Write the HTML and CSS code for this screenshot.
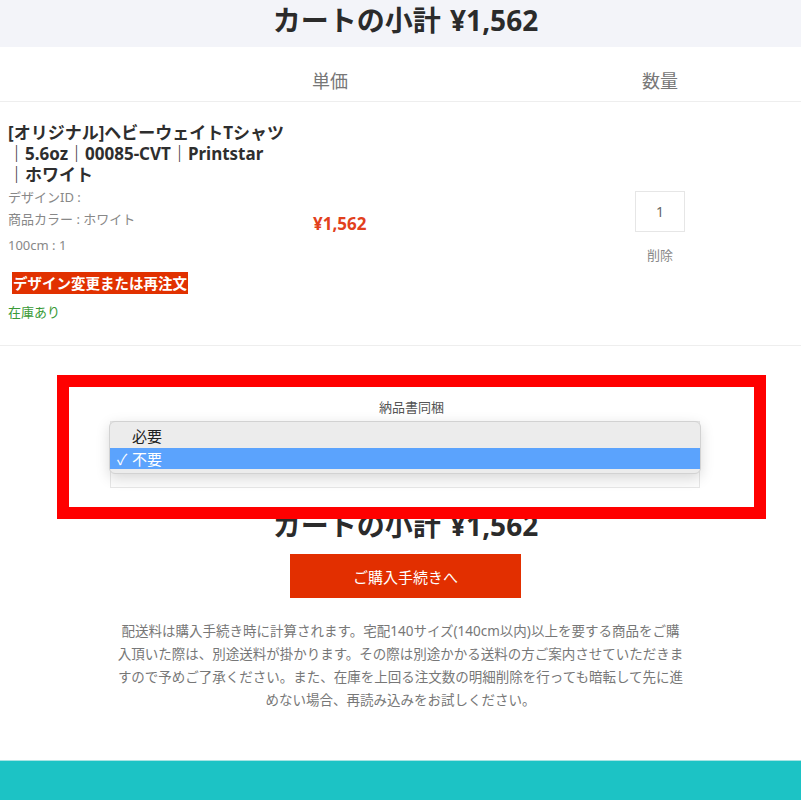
FILE: index.html
```html
<!DOCTYPE html>
<html lang="ja">
<head>
    <meta charset="UTF-8">
    <meta name="viewport" content="width=device-width, initial-scale=1.0">
    <title>カート</title>
    <link rel="stylesheet" href="styles.css">
</head>
<body>
    <header class="cart-top">
        <p class="cart-total">カートの小計 ¥1,562</p>
    </header>

    <section class="cart-head">
        <span></span>
        <span class="head-price">単価</span>
        <span></span>
        <span class="head-qty">数量</span>
    </section>

    <!-- item row -->
    <section class="cart-item">
        <div class="item-info">
            <p class="item-name">[オリジナル]ヘビーウェイトTシャツ<br>｜5.6oz｜00085-CVT｜Printstar<br>｜ホワイト</p>
            <p class="item-meta">デザインID :<br>商品カラー : ホワイト</p>
            <p class="item-meta size">100cm : 1</p>
            <p class="reorder"><span>デザイン変更または再注文</span></p>
            <p class="stock">在庫あり</p>
        </div>
        <div class="item-price">¥1,562</div>
        <span></span>
        <div class="item-qty">
            <input class="qty-input" type="text" value="1">
            <a class="remove" href="#">削除</a>
        </div>
    </section>

    <section class="checkout">
        <p class="option-label">納品書同梱</p>
        <div class="select-wrap">
            <div class="select-box"></div>
            <!-- open dropdown -->
            <ul class="select-menu">
                <li>必要</li>
                <li class="selected"><span class="check">✓</span>不要</li>
            </ul>
        </div>
        <p class="cart-total bottom-total">カートの小計 ¥1,562</p>
        <button class="buy-button">ご購入手続きへ</button>
        <p class="notice">配送料は購入手続き時に計算されます。宅配140サイズ(140cm以内)以上を要する商品をご購入頂いた際は、別途送料が掛かります。その際は別途かかる送料の方ご案内させていただきますので予めご了承ください。また、在庫を上回る注文数の明細削除を行っても暗転して先に進めない場合、再読み込みをお試しください。</p>

        <div class="highlight"></div>
    </section>

    <footer class="site-footer"></footer>
</body>
</html>
```

FILE: styles.css
```css
*{
    padding: 0;
    margin: 0;
    box-sizing: border-box;
}
body{
    font-family: "Noto Sans", "Noto Sans CJK JP", sans-serif;
    color: #333;
    background-color: white;
    width: 801px;
}

.cart-top{
    background-color: #f3f4f9;
    height: 47px;
    text-align: center;
}
.cart-total{
    font-family: "Noto Sans", "Noto Sans CJK JP", sans-serif;
    font-size: 28px;
    font-weight: bold;
    line-height: 40px;
    color: #2b2b2b;
    text-align: center;
    word-spacing: 2px;
    padding-left: 10px;
}

.cart-head,
.cart-item{
    display: grid;
    grid-template-columns: 290px 100px 170px 200px 1fr;
}
.cart-head{
    height: 55px;
    padding-top: 12px;
    line-height: 42px;
    font-family: "Noto Sans CJK JP", sans-serif;
    font-size: 18px;
    color: #777;
    border-bottom: 1px solid #eeeeee;
}
.head-price{
    text-align: center;
    padding-right: 20px;
}
.head-qty{
    text-align: center;
}

.cart-item{
    border-bottom: 1px solid #eeeeee;
}
.item-info{
    padding: 20px 0 22px 8px;
}
.item-name{
    font-size: 17px;
    font-weight: bold;
    line-height: 21px;
    color: #2e2e2e;
    white-space: nowrap;
}
.item-meta{
    font-size: 13px;
    line-height: 22px;
    color: #888;
    margin-top: 1px;
}
.item-meta.size{
    margin-top: 4px;
}
.reorder{
    margin-top: 17px;
    padding-left: 4px;
    line-height: 20px;
}
.reorder span{
    background-color: #e13100;
    color: white;
    font-size: 14.5px;
    font-weight: bold;
    padding: 1px 1px;
}
.stock{
    margin-top: 8px;
    font-size: 13px;
    line-height: 22px;
    color: #3a9a37;
}
.item-price{
    align-self: center;
    padding-left: 23px;
    font-size: 17px;
    font-weight: bold;
    color: #e2401c;
}
.item-qty{
    display: flex;
    flex-direction: column;
    align-items: center;
    padding-top: 89px;
}
.qty-input{
    width: 50px;
    height: 41px;
    border: 1px solid #e6e6e6;
    text-align: center;
    font: inherit;
    font-size: 14px;
    color: #666;
}
.remove{
    margin-top: 13px;
    font-family: "Noto Sans CJK JP", sans-serif;
    font-size: 13px;
    line-height: 20px;
    color: #888;
    text-decoration: none;
}

.checkout{
    position: relative;
    padding-top: 51px;
}
.option-label{
    font-family: "Noto Sans CJK JP", sans-serif;
    font-size: 13px;
    line-height: 20px;
    color: #555;
    text-align: center;
    padding-left: 22px;
}
.select-wrap{
    position: relative;
    width: 590px;
    margin: 4px 0 0 110px;
}
.select-box{
    height: 67px;
    border: 1px solid #e6e6e6;
    background-color: #fcfcfc;
}
.select-menu{
    position: absolute;
    top: 0;
    left: -1px;
    width: 592px;
    list-style: none;
    background-color: #ececec;
    border: 1px solid #d2d2d2;
    border-radius: 6px;
    padding-bottom: 4px;
    box-shadow: 0 4px 14px rgba(0, 0, 0, 0.15);
    font-family: "Noto Sans CJK JP", sans-serif;
    font-size: 15px;
    color: #222;
}
.select-menu li{
    height: 26px;
    line-height: 28px;
    padding-left: 22px;
}
.select-menu .selected{
    height: 21px;
    line-height: 21px;
    background-color: #5ba3fd;
    color: white;
    padding-left: 7px;
}
.check{
    display: inline-block;
    width: 15px;
}

.bottom-total{
    margin-top: 17px;
}
.buy-button{
    display: block;
    width: 231px;
    height: 44px;
    margin: 9px 0 0 290px;
    border: none;
    background-color: #e22f00;
    color: white;
    font-family: "Noto Sans CJK JP", sans-serif;
    font-size: 15px;
    cursor: pointer;
}
.notice{
    width: 568px;
    margin: 22px auto 0;
    font-size: 13.5px;
    line-height: 23px;
    color: #777;
    text-align: center;
}
/* annotation box drawn over the option area */
.highlight{
    position: absolute;
    left: 57px;
    top: 29px;
    width: 709px;
    height: 144px;
    border: 12px solid #ff0000;
}

.site-footer{
    margin-top: 48px;
    height: 40px;
    background-color: #1cc3c5;
    border-top: 1px solid #a6e4e4;
}
```
